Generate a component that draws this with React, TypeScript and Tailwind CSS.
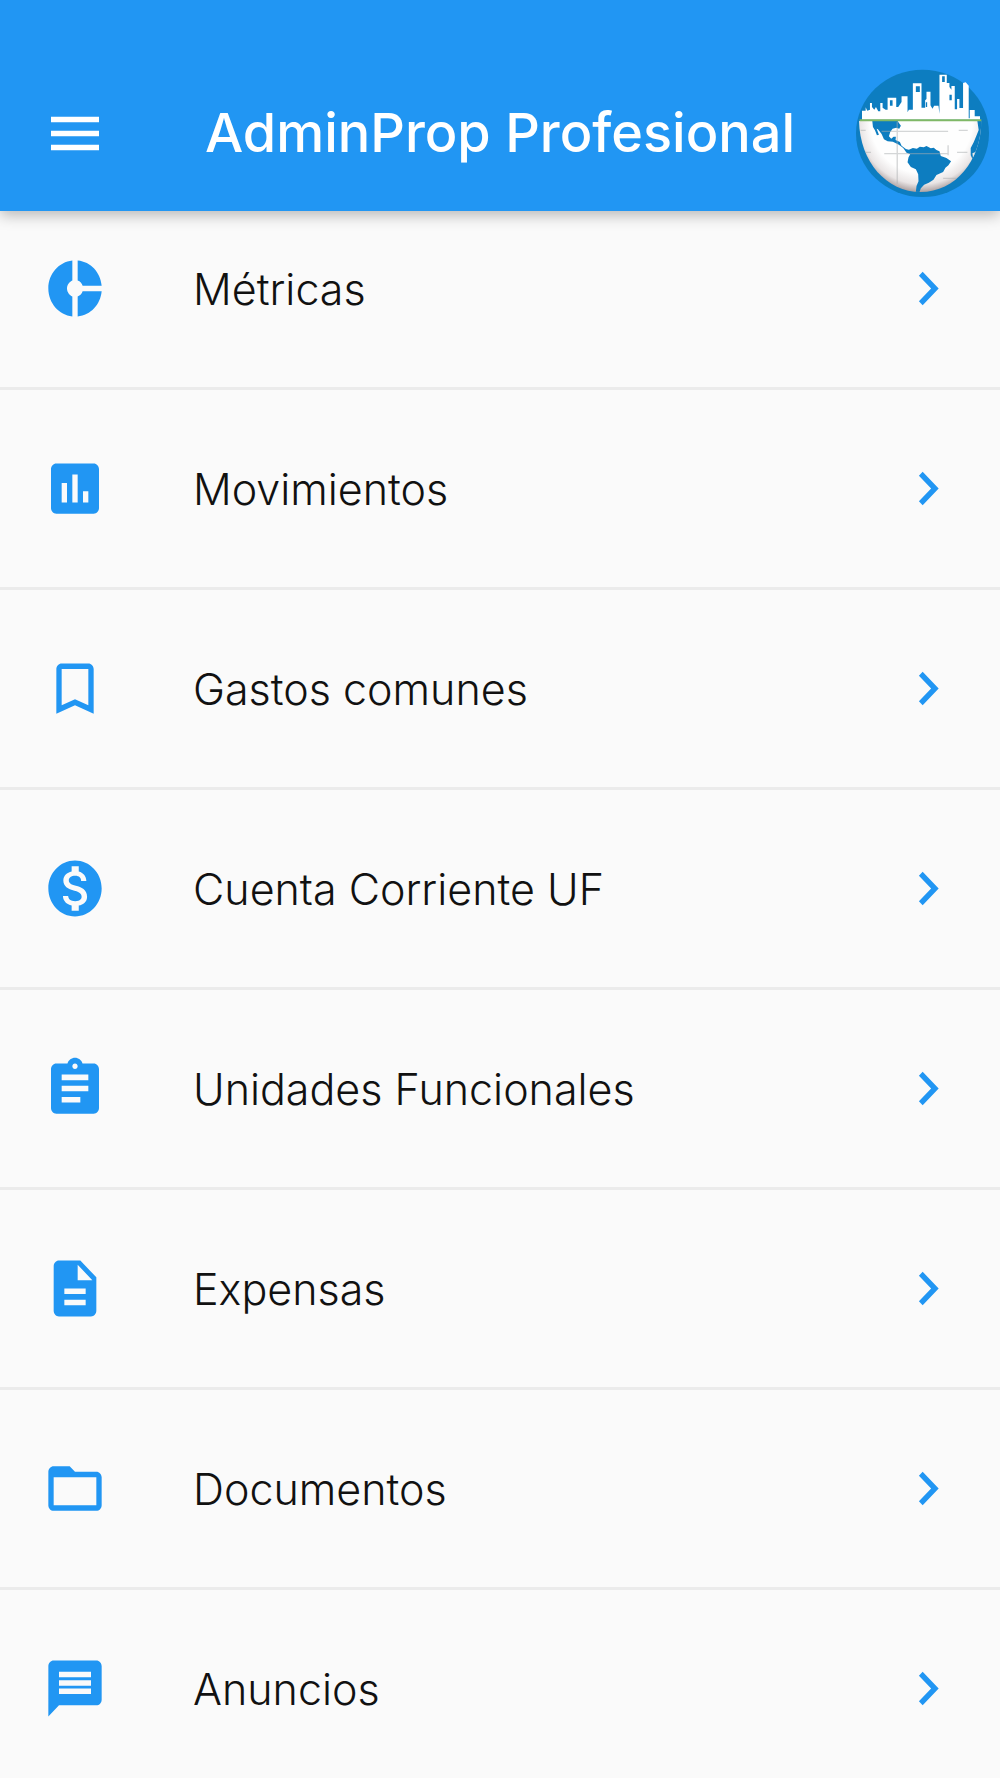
import {
  MdAssessment,
  MdAssignment,
  MdBookmarkBorder,
  MdChevronRight,
  MdDescription,
  MdDonutSmall,
  MdFolderOpen,
  MdMenu,
  MdMessage,
  MdMonetizationOn,
} from "react-icons/md"

const items = [
  { name: "Métricas", icon: MdDonutSmall },
  { name: "Movimientos", icon: MdAssessment },
  { name: "Gastos comunes", icon: MdBookmarkBorder },
  { name: "Cuenta Corriente UF", icon: MdMonetizationOn },
  { name: "Unidades Funcionales", icon: MdAssignment },
  { name: "Expensas", icon: MdDescription },
  { name: "Documentos", icon: MdFolderOpen },
  { name: "Anuncios", icon: MdMessage },
]

function Logo() {
  return (
    <svg
      viewBox="48 56 400 384"
      preserveAspectRatio="none"
      className="w-[133px] h-32"
      role="img"
      aria-label="AdminProp"
    >
      <defs>
        <radialGradient id="globe" gradientUnits="userSpaceOnUse" cx="245" cy="215" r="212">
          <stop offset="0.72" stopColor="#fefefe" />
          <stop offset="0.88" stopColor="#e9e5e5" />
          <stop offset="1" stopColor="#a89c9c" />
        </radialGradient>
        <clipPath id="half">
          <path d="M57 212H425C424 330 348 425 242 425C140 425 60 335 57 212Z" />
        </clipPath>
      </defs>
      <ellipse cx="248" cy="249" rx="200" ry="191" fill="#0d7dc0" />

      {/* skyline */}
      <path
        fill="#fff"
        d="M66 208V181H77V171L82 181L90 178V158H96V170L103 178L108 170L115 183H121V158H128V172L137 178H143V142H169V170H175L185 155V138H203V186L207 178H219V99H245V172H256V150L260 146V124H272V165L278 175L283 166H296L299 190V73H321V98H329V110L335 118V107H345V177H352V146H359V173H370V98L378 96L387 106V204H390V179H405V198H421V208Z"
      />
      <path
        fill="#0d7dc0"
        d="M150 150H158V166H150ZM228 108H240V125H228ZM258 156H262V170H258ZM307 78H315V95H307ZM329 133H336V150H329Z"
      />

      {/* globe */}
      <g clipPath="url(#half)">
        <path fill="url(#globe)" d="M50 212H430V430H50Z" />
        <path
          fill="#0d7dc0"
          d="M97 212H173L183 226L178 235L169 232L158 235L151 245L147 258L154 265L161 259H168L167 269L180 275L185 286L198 296L207 298L219 293L231 295L240 289L252 291L260 287L273 294L282 292L290 299L299 303L303 317L320 323L334 333L326 345L317 352L310 365L290 374L281 388L267 397L253 403L243 414L239 425H228L230 407L236 393L235 372L228 357L213 350L203 336L206 321L211 312L200 307L190 293L177 283L159 274L143 273L132 267L125 251L114 237L110 235L117 253L111 255L105 240L99 230Z"
        />
        <path fill="#0d7dc0" d="M413 212H430V320L400 330L393 315V293L402 276L411 254L417 239Z" />
        <path fill="#e9e9e9" d="M398 309L417 301L411 314L401 329Z" />
        <path
          fill="none"
          stroke="#a9adb0"
          strokeWidth="4"
          opacity="0.5"
          d="M125 243H325M133 310H323M172 214V400M325 285V315M357 240H384M352 306H383M62 240H77M75 306H93M310 384H350"
        />
      </g>
      <path stroke="#7fb866" strokeWidth="6" d="M59 210H425" />
    </svg>
  )
}

export default function App() {
  return (
    <div className="h-screen flex flex-col overflow-hidden bg-[#fafafa] font-['Inter',sans-serif]">
      <header className="relative z-10 grid grid-cols-[1fr_auto_1fr] items-center shrink-0 pt-[69px] pb-[14px] px-[11px] bg-[#2196f3] text-white shadow-[0_4px_14px_rgba(0,0,0,0.28)]">
        <button type="button" aria-label="Menú" className="justify-self-start ml-8">
          <MdMenu className="w-16 h-[67px]" preserveAspectRatio="none" />
        </button>
        <h1 className="text-[54px] leading-[64px] font-medium whitespace-nowrap">
          AdminProp Profesional
        </h1>
        <div className="justify-self-end">
          <Logo />
        </div>
      </header>

      <nav className="-mt-[21px] flex-1 overflow-y-auto [scrollbar-width:none]">
        <ul>
          {items.map((item) => (
            <li key={item.name} className="border-b-[3px] border-[#ebebeb]">
              <a href="#" className="flex items-center h-[197px] pl-[43px] pr-10">
                <item.icon
                  className="w-16 h-[67px] shrink-0 text-[#2196f3]"
                  preserveAspectRatio="none"
                />
                <span className="flex-1 ml-[86px] text-[43px] leading-[52px] font-light text-[#111]">
                  {item.name}
                </span>
                <MdChevronRight
                  className="w-16 h-[67px] shrink-0 text-[#2196f3]"
                  preserveAspectRatio="none"
                />
              </a>
            </li>
          ))}
        </ul>
      </nav>
    </div>
  )
}
